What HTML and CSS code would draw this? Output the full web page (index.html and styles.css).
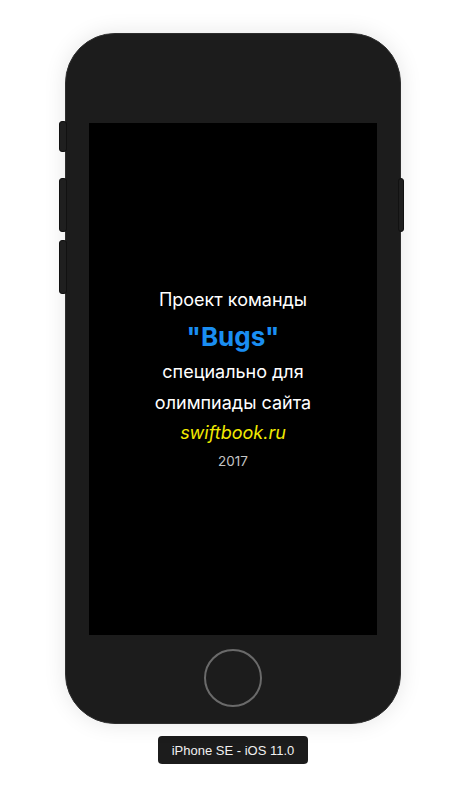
FILE: index.html
```html
<!DOCTYPE html>
<html lang="ru">
<head>
<meta charset="utf-8">
<title>iPhone SE - iOS 11.0</title>
<link rel="stylesheet" href="styles.css">
</head>
<body>
<div class="stage">
  <div class="phone">
    <span class="btn btn-l1"></span>
    <span class="btn btn-l2"></span>
    <span class="btn btn-l3"></span>
    <span class="btn btn-r1"></span>
    <div class="screen">
      <div class="content">
        <div class="line l1">Проект команды</div>
        <div class="line bugs">"Bugs"</div>
        <div class="line l3">специально для</div>
        <div class="line l4">олимпиады сайта</div>
        <div class="line site">swiftbook.ru</div>
        <div class="line year">2017</div>
      </div>
    </div>
    <div class="home"></div>
  </div>
  <div class="device-label">iPhone SE - iOS 11.0</div>
</div>
</body>
</html>
```
FILE: styles.css
```css
html, body {
  margin: 0;
  padding: 0;
  background: #ffffff;
}
.stage {
  width: 466px;
  height: 806px;
  display: flex;
  flex-direction: column;
  align-items: center;
  padding-top: 33px;
  box-sizing: border-box;
}
.phone {
  position: relative;
  width: 336px;
  height: 691px;
  box-sizing: border-box;
  background: #1c1c1c;
  border: 1px solid #2e2e2e;
  border-radius: 50px;
  box-shadow: 0 0 22px rgba(0, 0, 0, 0.10);
  display: flex;
  flex-direction: column;
  align-items: center;
  padding-top: 89px;
}
.btn {
  position: absolute;
  background: #1f1f1f;
  border: 1px solid #111;
  border-radius: 3px;
  box-sizing: border-box;
}
.btn-l1 { left: -7px; top: 87px; width: 8px; height: 31px; }
.btn-l2 { left: -7px; top: 144px; width: 8px; height: 54px; }
.btn-l3 { left: -7px; top: 206px; width: 8px; height: 54px; }
.btn-r1 { right: -4px; top: 144px; width: 6px; height: 54px; }
.screen {
  width: 288px;
  height: 512px;
  box-sizing: border-box;
  background: #000;
  display: flex;
  flex-direction: column;
  align-items: center;
  padding-top: 162px;
}
.content {
  display: flex;
  flex-direction: column;
  align-items: center;
  font-family: Inter, "Liberation Sans", Arial, sans-serif;
  color: #fff;
}
.line { white-space: nowrap; }
.l1 { font-size: 18px; line-height: 30px; }
.bugs {
  font-size: 26px;
  font-weight: 700;
  color: #1a8ef2;
  line-height: 27px;
  margin-top: 8px;
}
.l3 { font-size: 18px; line-height: 33px; margin-top: 5px; }
.l4 { font-size: 18px; line-height: 30px; }
.site {
  font-size: 18px;
  font-style: italic;
  color: #f2ea00;
  line-height: 30px;
}
.year {
  font-size: 13.5px;
  color: #c4c4c4;
  line-height: 27px;
}
.home {
  width: 58px;
  height: 58px;
  box-sizing: border-box;
  border: 2px solid #6a6a6a;
  border-radius: 50%;
  margin-top: 14px;
}
.device-label {
  margin-top: 12px;
  width: 150px;
  height: 28px;
  background: #1c1c1c;
  border-radius: 4px;
  color: #f0f0f0;
  font-family: "Liberation Sans", Arial, sans-serif;
  font-size: 13px;
  display: flex;
  align-items: center;
  justify-content: center;
}
```
